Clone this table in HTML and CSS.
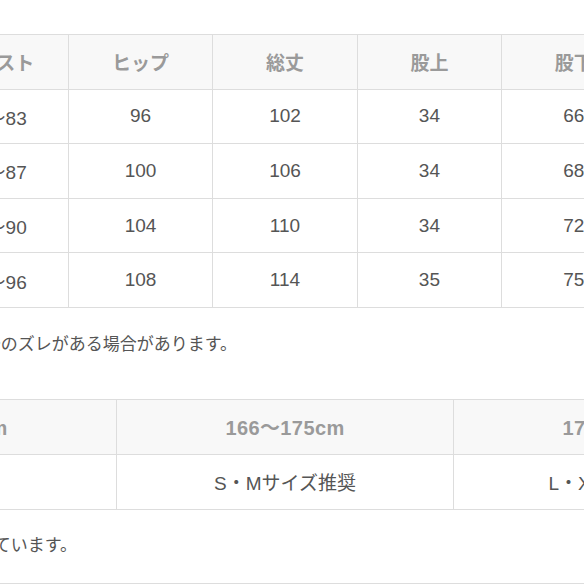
FILE: index.html
```html
<!DOCTYPE html>
<html lang="ja">
<head>
<meta charset="utf-8">
<title>サイズ表</title>
<link rel="stylesheet" href="styles.css">
</head>
<body>
<div class="page">
  <table class="size-table">
    <thead>
      <tr><th>サイズ</th><th>ウエスト</th><th>ヒップ</th><th>総丈</th><th>股上</th><th>股下</th><th>裾幅</th></tr>
    </thead>
    <tbody>
      <tr><td>S</td><td>77〜83</td><td>96</td><td>102</td><td>34</td><td>66</td><td>20</td></tr>
      <tr><td>M</td><td>81〜87</td><td>100</td><td>106</td><td>34</td><td>68</td><td>21</td></tr>
      <tr><td>L</td><td>84〜90</td><td>104</td><td>110</td><td>34</td><td>72</td><td>22</td></tr>
      <tr><td>XL</td><td>90〜96</td><td>108</td><td>114</td><td>35</td><td>75</td><td>23</td></tr>
    </tbody>
  </table>
  <p class="note note-first"><span>※平置きでの採寸のため、多少のズレがある場合があります。</span></p>
  <table class="size-table height-table">
    <thead>
      <tr><th>155〜165cm</th><th>166〜175cm</th><th>176〜185cm</th></tr>
    </thead>
    <tbody>
      <tr><td>Sサイズ</td><td>S・Mサイズ推奨</td><td>L・XLサイズ推奨</td></tr>
    </tbody>
  </table>
  <p class="note note-second"><span>※身長別の目安となっています。</span></p>
  <div class="rule"></div>
</div>
</body>
</html>
```
FILE: styles.css
```css
html, body {
  margin: 0;
  padding: 0;
  background: #ffffff;
}

body {
  overflow: hidden;
  font-family: "Liberation Sans", "Noto Sans CJK JP", sans-serif;
  color: #555555;
}

.page {
  width: 1012px;
  margin-left: -221px;
  padding-top: 34px;
}

.size-table {
  width: 1012px;
  border-collapse: collapse;
  table-layout: fixed;
}

.size-table th,
.size-table td {
  border: 1px solid #dddddd;
  padding: 0;
  height: 53.6px;
  text-align: center;
  vertical-align: middle;
  font-size: 19px;
  white-space: nowrap;
}

.size-table th {
  background: #f8f8f8;
  color: #9a9a9a;
  font-weight: bold;
}

.size-table td {
  color: #555555;
}

.height-table th,
.height-table td {
  height: 54px;
}

.height-table th {
  font-size: 20px;
  letter-spacing: 0.4px;
}

.note {
  display: flex;
  justify-content: flex-end;
  white-space: nowrap;
  font-size: 17px;
  line-height: 26px;
  color: #555555;
  margin: 0;
}

.note span {
  flex-shrink: 0;
}

.note-first {
  width: 458px;
  margin-top: 24px;
  margin-bottom: 41px;
}

.note-second {
  width: 298px;
  margin-top: 23px;
  margin-bottom: 24px;
}

.rule {
  border-top: 1px solid #dddddd;
}
```
